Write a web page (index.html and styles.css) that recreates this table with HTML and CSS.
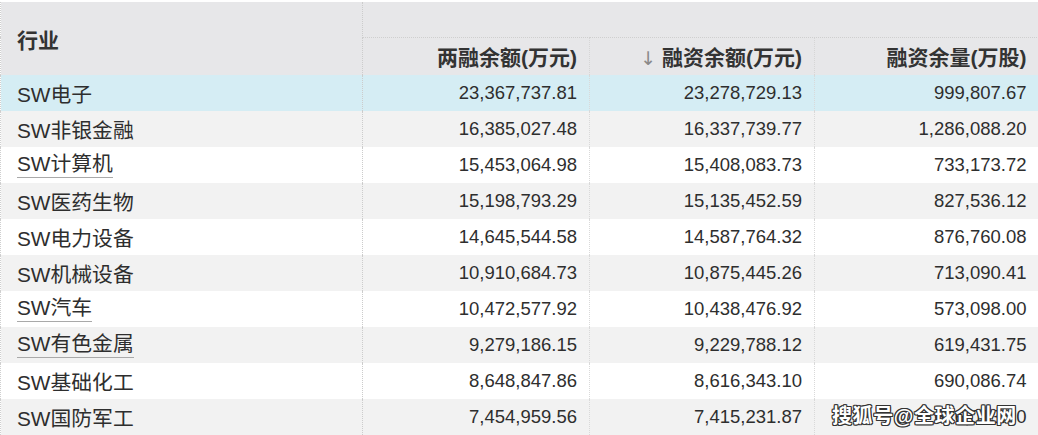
FILE: index.html
```html
<!DOCTYPE html>
<html lang="zh">
<head>
<meta charset="utf-8">
<link rel="stylesheet" href="styles.css">
</head>
<body>
<div class="wrap">
<table class="grid">
  <colgroup>
    <col class="c1"><col class="c2"><col class="c3"><col class="c4">
  </colgroup>
  <thead>
    <tr class="h-top">
      <th class="name-h" rowspan="2">行业</th>
      <th class="blank" colspan="3"></th>
    </tr>
    <tr class="h-bot">
      <th class="num-h">两融余额(万元)</th>
      <th class="num-h"><span class="arrow">↓</span> 融资余额(万元)</th>
      <th class="num-h">融资余量(万股)</th>
    </tr>
  </thead>
  <tbody>
    <tr class="sel"><td class="name">SW电子</td><td>23,367,737.81</td><td>23,278,729.13</td><td>999,807.67</td></tr>
    <tr class="odd"><td class="name">SW非银金融</td><td>16,385,027.48</td><td>16,337,739.77</td><td>1,286,088.20</td></tr>
    <tr><td class="name"><span class="ul">SW计算机</span></td><td>15,453,064.98</td><td>15,408,083.73</td><td>733,173.72</td></tr>
    <tr class="odd"><td class="name">SW医药生物</td><td>15,198,793.29</td><td>15,135,452.59</td><td>827,536.12</td></tr>
    <tr><td class="name">SW电力设备</td><td>14,645,544.58</td><td>14,587,764.32</td><td>876,760.08</td></tr>
    <tr class="odd"><td class="name">SW机械设备</td><td>10,910,684.73</td><td>10,875,445.26</td><td>713,090.41</td></tr>
    <tr><td class="name"><span class="ul">SW汽车</span></td><td>10,472,577.92</td><td>10,438,476.92</td><td>573,098.00</td></tr>
    <tr class="odd"><td class="name"><span class="ul">SW有色金属</span></td><td>9,279,186.15</td><td>9,229,788.12</td><td>619,431.75</td></tr>
    <tr><td class="name">SW基础化工</td><td>8,648,847.86</td><td>8,616,343.10</td><td>690,086.74</td></tr>
    <tr class="odd"><td class="name">SW国防军工</td><td>7,454,959.56</td><td>7,415,231.87</td><td>626,013.40</td></tr>
  </tbody>
</table>
<div class="watermark">搜狐号@全球企业网</div>
</div>
</body>
</html>
```

FILE: styles.css
```css
html, body {
  margin: 0;
  padding: 0;
  background: #ffffff;
}
body {
  font-family: "Liberation Sans", "Noto Sans CJK SC", sans-serif;
  color: #333333;
  overflow: hidden;
}
.wrap {
  position: relative;
  width: 1038px;
  height: 435px;
  padding-top: 2px;
  box-sizing: border-box;
}
.grid {
  border-collapse: collapse;
  table-layout: fixed;
  width: 1038px;
  border-left: 1px dotted #cfcfcf;
}
.c1 { width: 362px; }
.c2 { width: 227px; }
.c3 { width: 225px; }
.c4 { width: 224px; }

thead th {
  background: #e7e7e9;
  font-weight: bold;
  color: #333333;
  padding: 0;
}
.h-top { height: 35px; }
.h-bot { height: 38px; }
.name-h {
  text-align: left;
  vertical-align: top;
  padding: 22px 0 0 16px !important;
  font-size: 21px;
  border-right: 1px dotted #cccccc;
}
.blank {
  border-bottom: 1px dotted #cfcfcf;
}
.num-h {
  text-align: right;
  font-size: 21px;
  padding-right: 12px !important;
  border-right: 1px dotted #d6d6d6;
}
.num-h:last-child { border-right: none; }
.arrow {
  font-family: "DejaVu Sans", sans-serif;
  font-weight: normal;
  font-size: 19px;
  color: #8a8a8a;
}

tbody tr { height: 36px; background: #ffffff; }
tbody tr.odd { background: #f2f2f2; }
tbody tr.sel { background: #d5edf4; }
tbody td {
  padding: 0 12px 0 0;
  text-align: right;
  font-size: 18.5px;
  color: #2e2e2e;
  white-space: nowrap;
  border-right: 1px dotted #d9d9d9;
}
tbody td:last-child { border-right: none; }
tbody td.name {
  text-align: left;
  font-size: 20.8px;
  padding: 0 0 0 16px;
  border-right: 1px dotted #cccccc;
}
.ul {
  display: inline-block;
  border-bottom: 1px solid #a9a9a9;
  line-height: 23px;
  padding-bottom: 2px;
}
.watermark {
  position: absolute;
  left: 832px;
  top: 400px;
  font-size: 20px;
  font-weight: bold;
  letter-spacing: 0.6px;
  color: #ffffff;
  text-shadow: -1px -1px 0 #333, 1px -1px 0 #333, -1px 1px 0 #333, 1px 1px 0 #333, 0 1px 0 #333, 0 -1px 0 #333, 1px 0 0 #333, -1px 0 0 #333;
}
```
